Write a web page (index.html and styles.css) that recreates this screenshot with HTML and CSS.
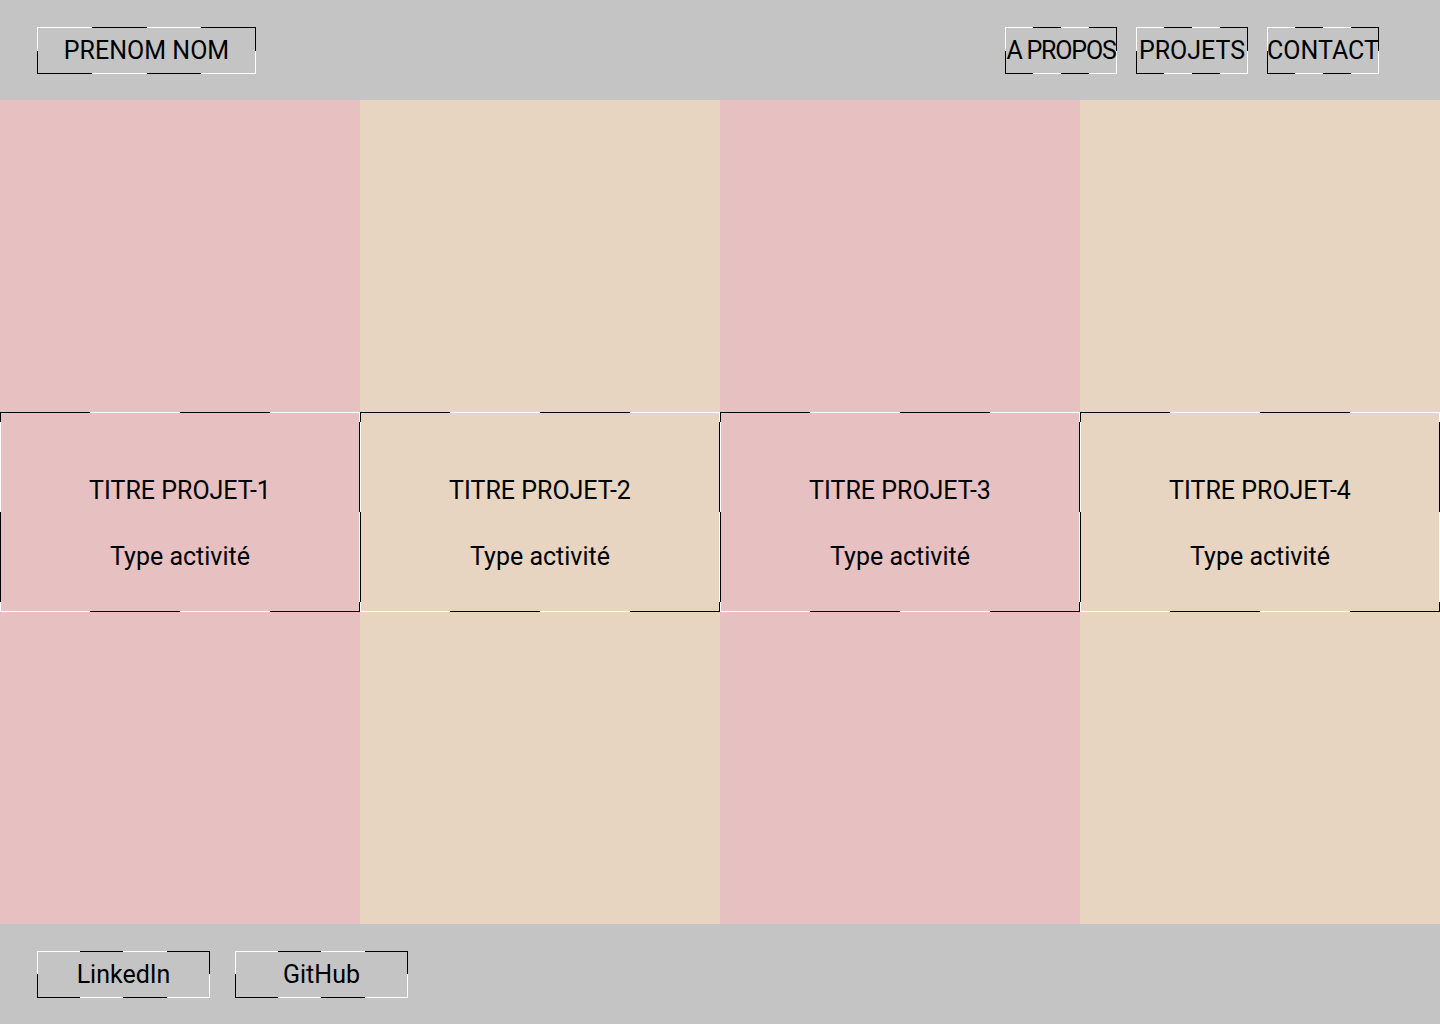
FILE: index.html
```html
<!DOCTYPE html>
<html lang="fr">
<head>
<meta charset="utf-8">
<title>Portfolio</title>
<link rel="stylesheet" href="styles.css">
</head>
<body>
<header class="site-header">
  <a class="box brand" href="#">PRENOM NOM</a>
  <nav class="nav">
    <a class="box nav-link nav-link-tight" href="#">A PROPOS</a>
    <a class="box nav-link" href="#">PROJETS</a>
    <a class="box nav-link" href="#">CONTACT</a>
  </nav>
</header>
<main class="projects">
  <section class="column pink">
    <div class="card">
      <h2 class="card-title">TITRE PROJET-1</h2>
      <p class="card-type">Type activité</p>
    </div>
  </section>
  <section class="column beige">
    <div class="card">
      <h2 class="card-title">TITRE PROJET-2</h2>
      <p class="card-type">Type activité</p>
    </div>
  </section>
  <section class="column pink">
    <div class="card">
      <h2 class="card-title">TITRE PROJET-3</h2>
      <p class="card-type">Type activité</p>
    </div>
  </section>
  <section class="column beige">
    <div class="card">
      <h2 class="card-title">TITRE PROJET-4</h2>
      <p class="card-type">Type activité</p>
    </div>
  </section>
</main>
<footer class="site-footer">
  <a class="box social" href="#">LinkedIn</a>
  <a class="box social" href="#">GitHub</a>
</footer>
</body>
</html>
```

FILE: styles.css
```css
* { box-sizing: border-box; }

html, body {
  margin: 0;
  padding: 0;
}

body {
  width: 1440px;
  height: 1024px;
  font-family: Roboto, "Liberation Sans", sans-serif;
  color: #000;
  display: flex;
  flex-direction: column;
  overflow: hidden;
}

a { color: #000; text-decoration: none; }

/* two-tone wireframe border (header/footer boxes) */
.box {
  display: flex;
  align-items: center;
  justify-content: center;
  height: 47px;
  padding-top: 1px;
  font-size: 25px;
  line-height: 29px;
  white-space: nowrap;
  background:
    linear-gradient(to right, #fff 25%, #000 25% 50%, #fff 50% 75%, #000 75%) top left / 100% 1px no-repeat,
    linear-gradient(to right, #000 25%, #fff 25% 50%, #000 50% 75%, #fff 75%) bottom left / 100% 1px no-repeat,
    linear-gradient(to bottom, #fff 50%, #000 50%) top left / 1px 100% no-repeat,
    linear-gradient(to bottom, #000 50%, #fff 50%) top right / 1px 100% no-repeat;
}

.site-header {
  height: 100px;
  flex: 0 0 100px;
  background: #c4c4c4;
  display: flex;
  align-items: center;
  justify-content: space-between;
  padding: 0 61px 0 37px;
}

.brand {
  width: 219px;
}

.nav {
  display: flex;
  gap: 19px;
}

.nav-link {
  width: 112px;
}

.nav-link-tight {
  letter-spacing: -1.2px;
}

.projects {
  flex: 1 1 auto;
  display: grid;
  grid-template-columns: repeat(4, 1fr);
}

.column {
  display: flex;
  align-items: center;
}

.pink { background: #e7c0c1; }
.beige { background: #e7d5c1; }

.card {
  width: 100%;
  height: 200px;
  display: flex;
  flex-direction: column;
  align-items: center;
  padding-top: 64px;
  gap: 37px;
  background:
    linear-gradient(to right, #000 25%, #fff 25% 50%, #000 50% 75%, #fff 75%) top left / 100% 1px no-repeat,
    linear-gradient(to right, #fff 25%, #000 25% 50%, #fff 50% 75%, #000 75%) bottom left / 100% 1px no-repeat,
    linear-gradient(to bottom, #000 10px, #fff 10px 100px, #000 100px 190px, #fff 190px) top left / 1px 100% no-repeat,
    linear-gradient(to bottom, #fff 10px, #000 10px 100px, #fff 100px 190px, #000 190px) top right / 1px 100% no-repeat;
}

.card-title,
.card-type {
  margin: 0;
  font-size: 25px;
  line-height: 29px;
  font-weight: 400;
}

.site-footer {
  height: 100px;
  flex: 0 0 100px;
  background: #c4c4c4;
  display: flex;
  align-items: center;
  gap: 25px;
  padding: 0 37px;
}

.social {
  width: 173px;
}
```
